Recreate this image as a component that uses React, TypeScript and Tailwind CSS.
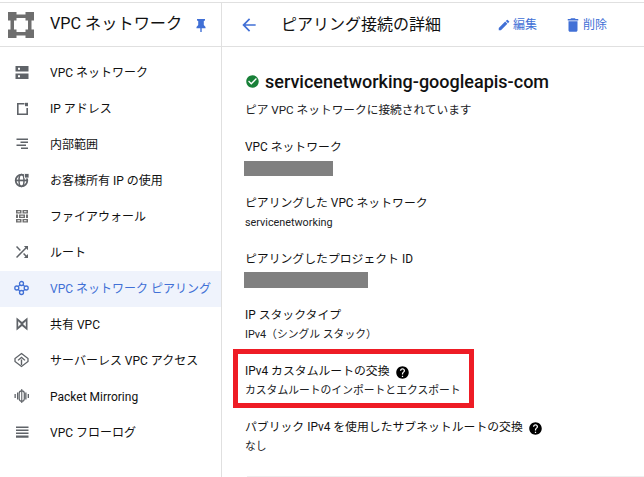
import type { ReactNode } from "react";

const jp = "font-['Roboto','Noto_Sans_CJK_JP',sans-serif]";

const gray = "#5f6368";
const blue = "#4170d6";

const Svg = ({ children, color = gray, box = 18 }: { children: ReactNode; color?: string; box?: number }) => (
  <svg width="18" height="18" viewBox={`0 0 ${box} ${box}`} fill={color} stroke="none" className="shrink-0 -translate-y-px">
    {children}
  </svg>
);

const navItems: { label: string; icon: ReactNode; active?: boolean }[] = [
  {
    label: "VPC ネットワーク",
    icon: (
      <Svg>
        <path fillRule="evenodd" d="M2.500 3h13v5.500h-13zM2.500 10.500h13V16h-13zM5 4.800v1.900h2V4.800zM5 12.300v1.900h2v-1.900z" />
      </Svg>
    ),
  },
  {
    label: "IP アドレス",
    icon: (
      <Svg>
        <path d="M4 4h7.500v1.600H5.600v8.800h7.800V9H15v7H4z" />
        <path d="M12 3.800h3v3.400h-3z" />
      </Svg>
    ),
  },
  {
    label: "内部範囲",
    icon: (
      <Svg>
        <path d="M3.500 3.500H15v1.500H3.500zM7.500 6.500H15V8H7.500zM3.500 9.500H13V11H3.500zM8 12.500h7V14H8z" />
      </Svg>
    ),
  },
  {
    label: "お客様所有 IP の使用",
    icon: (
      <Svg>
        <circle cx="8.500" cy="9.500" r="5.800" fill="none" stroke={gray} strokeWidth="1.800" />
        <ellipse cx="8.500" cy="9.500" rx="2.500" ry="6" fill="none" stroke={gray} strokeWidth="1.500" />
        <path d="M2.500 8.600h12v1.700h-12z" />
        <path d="M11.500 2.500h4.500v4.500h-4.500z" stroke="#fff" strokeWidth="0.800" />
      </Svg>
    ),
  },
  {
    label: "ファイアウォール",
    icon: (
      <Svg color="#707070">
        <path
          fillRule="evenodd"
          d="M3 3h5.500v3.500H3zM4.500 4.200v1.100h2.500V4.200zM9.500 3H15v3.500H9.500zM11 4.200v1.100h2.500V4.200zM3 7.500h2V11H3zM6 7.500h6V11H6zM7.500 8.700v1.100h3V8.700zM13 7.500h2V11h-2zM3 12h5.500v3.500H3zM4.500 13.200v1.100h2.500v-1.100zM9.500 12H15v3.500H9.500zM11 13.200v1.100h2.500v-1.100z"
        />
      </Svg>
    ),
  },
  {
    label: "ルート",
    icon: (
      <Svg box={24}>
        <path d="M10.590 9.170L5.410 4 4 5.410l5.170 5.170 1.420-1.410zM14.500 4l2.040 2.040L4 18.590 5.410 20 17.960 7.460 20 9.500V4h-5.500zm.33 9.410l-1.410 1.410 3.130 3.130L14.500 20H20v-5.500l-2.040 2.040-3.130-3.130z" />
      </Svg>
    ),
  },
  {
    label: "VPC ネットワーク ピアリング",
    active: true,
    icon: (
      <Svg color={blue}>
        <path d="M8.500 4.500L13.500 9 8.500 13.500 3.500 9z" fill="none" stroke={blue} strokeWidth="1.200" />
        <circle cx="8.500" cy="4.500" r="2" fill="#eff3fc" stroke={blue} strokeWidth="1.300" />
        <circle cx="8.500" cy="13.500" r="2" fill="#eff3fc" stroke={blue} strokeWidth="1.300" />
        <circle cx="3.800" cy="9" r="2" fill="#eff3fc" stroke={blue} strokeWidth="1.300" />
        <circle cx="13.200" cy="9" r="2" fill="#eff3fc" stroke={blue} strokeWidth="1.300" />
      </Svg>
    ),
  },
  {
    label: "共有 VPC",
    icon: (
      <Svg>
        <path fillRule="evenodd" d="M3.500 2.500L9 7l5.500-4.500v13L9 11l-5.500 4.500zM5.200 6.300v5.400L8 9zM12.800 6.300L10 9l2.800 2.700z" />
      </Svg>
    ),
  },
  {
    label: "サーバーレス VPC アクセス",
    icon: (
      <Svg>
        <path d="M8.500 2.500L15 7.500 15 10.500 8.500 15.500 2 10.500 2 7.500z" fill="none" stroke={gray} strokeWidth="1.300" />
        <path d="M4.500 9l4-3.500 4 3.500-1 .8-3-2.600-3 2.600zM7.800 8.500h1.400V14H7.800z" />
      </Svg>
    ),
  },
  {
    label: "Packet Mirroring",
    icon: (
      <Svg>
        <path d="M1.500 7h1.300v4H1.500zM4 5.500h1.300v7H4zM12.200 5.500h1.300v7h-1.300zM14.700 7H16v4h-1.300z" />
        <rect x="6.200" y="3.800" width="5.100" height="10.400" rx="2.500" fill="none" stroke={gray} strokeWidth="1.200" />
        <path d="M8.200 2h1.100v14H8.200z" />
      </Svg>
    ),
  },
  {
    label: "VPC フローログ",
    icon: (
      <Svg>
        <path d="M3 3.500h12.500v1.500H3zM3 6.500h12.500v1.500H3zM3 9.500h12.500v1.500H3zM3 12.500h12.500v2.300H3z" />
      </Svg>
    ),
  },
];

const Help = () => (
  <svg width="15" height="15" viewBox="0 0 24 24" fill="#000" className="shrink-0">
    <path d="M12 2C6.480 2 2 6.480 2 12s4.480 10 10 10 10-4.480 10-10S17.520 2 12 2zm1 17h-2v-2h2v2zm2.070-7.750l-.9.920C13.450 12.900 13 13.500 13 15h-2v-.5c0-1.100.45-2.100 1.170-2.830l1.240-1.260c.37-.36.59-.86.59-1.410 0-1.100-.9-2-2-2s-2 .9-2 2H8c0-2.210 1.790-4 4-4s4 1.790 4 4c0 .88-.36 1.680-.93 2.250z" />
  </svg>
);

function Field({ label, value, block, help }: { label: string; value?: string; block?: ReactNode; help?: boolean }) {
  return (
    <div className="h-14 pt-[3px]">
      <div className="flex items-center gap-[5px] h-5 text-[11.850px] text-[#111]">
        <span>{label}</span>
        {help && <Help />}
      </div>
      {value && <div className="h-5 -mt-px text-[10.800px] leading-5 text-[#202124]">{value}</div>}
      {block}
    </div>
  );
}

export default function App() {
  return (
    <div className={`${jp} w-[644px] h-[477px] overflow-hidden bg-white pt-[2px] flex flex-col relative`}>
      <div className="h-[45px] shrink-0 flex border-y border-[#e0e0e0]">
        <div className="w-[222px] shrink-0 flex items-center pl-[8px] border-r border-[#e0e0e0]">
          <svg width="26" height="26" viewBox="0 0 26 26" fill="#6e6e6e" className="shrink-0">
            <path d="M0 0h8.500v8.500H0zM17.500 0H26v8.500h-8.500zM0 17.500h8.500V26H0zM17.500 17.500H26V26h-8.500z" />
            <path d="M8 2.500h10v3.500H8zM8 20h10v3.500H8zM2.500 8h3.500v10H2.500zM20 8h3.500v10H20z" />
          </svg>
          <span className="ml-[16px] text-[16.200px] text-[#111] whitespace-nowrap">VPC ネットワーク</span>
          <svg width="14" height="14" viewBox="0 0 14 14" fill={blue} className="ml-[12px] shrink-0">
            <path d="M3 1h8v1.500L9.800 3v4l1.700 2v1.300H7.700V14H6.300v-3.700H2.500V9l1.700-2V3L3 2.500z" />
          </svg>
        </div>
        <div className="flex-1 flex items-center pl-[17px]">
          <svg width="20" height="20" viewBox="0 0 24 24" fill={blue} className="shrink-0">
            <path d="M20 11H7.830l5.590-5.590L12 4l-8 8 8 8 1.410-1.410L7.830 13H20v-2z" />
          </svg>
          <span className="ml-[22px] text-[16px] text-[#111] whitespace-nowrap">ピアリング接続の詳細</span>
          <div className="ml-[56px] flex items-center text-[#4170d6] text-[12px]">
            <svg width="14" height="14" viewBox="0 0 24 24" fill={blue} className="shrink-0">
              <path d="M3 17.250V21h3.750L17.810 9.940l-3.750-3.750L3 17.250zM20.710 7.040a1 1 0 000-1.410l-2.340-2.340a1 1 0 00-1.410 0l-1.830 1.830 3.750 3.750 1.830-1.830z" />
            </svg>
            <span className="ml-[2px]">編集</span>
            <svg width="18" height="18" viewBox="0 0 24 24" fill={blue} className="ml-[27px] shrink-0">
              <path d="M6 19c0 1.100.9 2 2 2h8c1.100 0 2-.9 2-2V7H6v12zM19 4h-3.500l-1-1h-5l-1 1H5v2h14V4z" />
            </svg>
            <span className="ml-[1px]">削除</span>
          </div>
        </div>
      </div>

      <div className="flex-1 flex min-h-0">
        <nav className="w-[222px] shrink-0 border-r border-[#e0e0e0] pt-[8px]">
          {navItems.map((item) => (
            <div
              key={item.label}
              className={`h-9 flex items-center pl-[13px] ${item.active ? "bg-[#eff3fc] text-[#4170d6]" : "text-[#111]"}`}
            >
              {item.icon}
              <span className="ml-[19px] text-[12px] whitespace-nowrap">{item.label}</span>
            </div>
          ))}
        </nav>

        <main className="flex-1 pl-[23px] pt-[22px] min-w-0">
          <div className="flex items-center h-6">
            <svg width="15" height="15" viewBox="0 0 24 24" fill="#188038" className="shrink-0">
              <path d="M12 2C6.480 2 2 6.480 2 12s4.480 10 10 10 10-4.480 10-10S17.520 2 12 2zm-2 15l-5-5 1.410-1.410L10 14.170l7.590-7.590L19 8l-9 9z" />
            </svg>
            <span className="ml-[5px] text-[18px] font-medium text-[#111] whitespace-nowrap">
              servicenetworking-googleapis-com
            </span>
          </div>
          <div className="mt-[7px] h-5 text-[11.700px] leading-5 text-[#202124]">ピア VPC ネットワークに接続されています</div>
          <div className="mt-[15px]">
            <Field label="VPC ネットワーク" block={<div className="w-[89px] h-[15px] mt-[3px] -ml-px bg-[#808080]" />} />
            <Field label="ピアリングした VPC ネットワーク" value="servicenetworking" />
            <Field label="ピアリングしたプロジェクト ID" block={<div className="w-[124px] h-4 mt-[2px] -ml-px bg-[#808080]" />} />
            <Field label="IP スタックタイプ" value="IPv4（シングル スタック）" />
            <div className="relative">
              <Field label="IPv4 カスタムルートの交換" value="カスタムルートのインポートとエクスポート" help />
              <div className="absolute left-[-12px] top-[-10px] w-[241px] h-[59px] border-[5px] border-[#ee1c25]" />
            </div>
            <Field label="パブリック IPv4 を使用したサブネットルートの交換" value="なし" help />
          </div>
          <div className="mt-[5px] h-px ml-[2px] bg-[#eeeeee]" />
        </main>
      </div>
    </div>
  );
}
